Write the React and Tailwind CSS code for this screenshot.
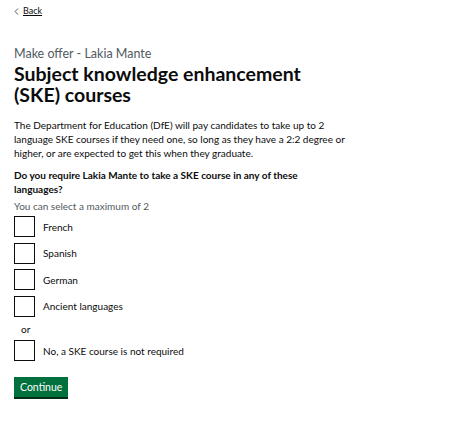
import React from "react";

const options = ["French", "Spanish", "German", "Ancient languages"];

function Checkbox({ label }) {
  return (
    <label className="flex items-center gap-[8px] h-[21px] mb-[5.5px]">
      <span className="w-[21px] h-[21px] border-[1.5px] border-[#0b0c0c] bg-white shrink-0" />
      <span className="text-[10px] leading-[14px] text-[#0b0c0c]">{label}</span>
    </label>
  );
}

export default function App() {
  return (
    <div
      className="w-[474px] h-[427px] bg-white px-[14px] text-[#0b0c0c]"
      style={{ fontFamily: 'Lato, "Liberation Sans", Arial, sans-serif' }}
    >
      <div className="flex pt-[5px] leading-[12px]">
        <a href="#" className="flex items-center gap-[4px] text-[9px] leading-[12px] underline text-[#0b0c0c]">
          <svg width="5" height="7" viewBox="0 0 5 7">
            <path d="M4 0.5 L1 3.5 L4 6.5" fill="none" stroke="#505a5f" strokeWidth="1" />
          </svg>
          Back
        </a>
      </div>

      <div className="mt-[29px]">
        <span className="block text-[12.5px] leading-[16px] text-[#505a5f]">Make offer - Lakia Mante</span>
        <h1 className="text-[19.5px] leading-[21px] font-bold mt-[1px]">
          Subject knowledge enhancement
          <br />
          (SKE) courses
        </h1>
      </div>

      <p className="mt-[13px] text-[10px] leading-[14px] w-[335px]">
        The Department for Education (DfE) will pay candidates to take up to 2 language SKE courses if they need one, so long as they have a 2:2 degree or higher, or are expected to get this when they graduate.
      </p>

      <fieldset className="mt-[9px]">
        <legend className="text-[10px] leading-[13.5px] font-bold w-[290px]">
          Do you require Lakia Mante to take a SKE course in any of these languages?
        </legend>
        <div className="text-[10px] leading-[14px] text-[#505a5f] mt-[3px]">You can select a maximum of 2</div>
        <div className="mt-[3px]">
          {options.map((o) => (
            <Checkbox key={o} label={o} />
          ))}
          <div className="text-[10px] leading-[14px] pl-[7px] mt-[0px] mb-[4px]">or</div>
          <Checkbox label="No, a SKE course is not required" />
        </div>
      </fieldset>

      <button className="mt-[10px] bg-[#00703c] text-white text-[10.5px] leading-[14px] px-[6px] pt-[3px] pb-[3px] shadow-[0_2px_0_#002d18]">
        Continue
      </button>
    </div>
  );
}
